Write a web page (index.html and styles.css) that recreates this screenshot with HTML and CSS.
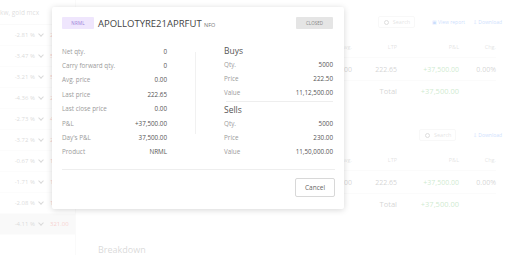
FILE: index.html
```html
<!DOCTYPE html>
<html lang="en">
<head>
    <meta charset="UTF-8">
    <meta name="viewport" content="width=device-width, initial-scale=1.0">
    <title>Positions</title>
    <link rel="stylesheet" href="styles.css">
</head>
<body>
    <div class="page">
        <aside class="watch">
            <div class="watch-search">kw, gold mcx</div>
            <div class="watch-row"><span class="chg">-2.81 %</span><span class="chev"></span><span class="ltp">2</span></div>
            <div class="watch-row"><span class="chg">-3.47 %</span><span class="chev"></span><span class="ltp">5</span></div>
            <div class="watch-row"><span class="chg">-3.21 %</span><span class="chev"></span><span class="ltp">5</span></div>
            <div class="watch-row"><span class="chg">-4.36 %</span><span class="chev"></span><span class="ltp">2</span></div>
            <div class="watch-row"><span class="chg">-2.73 %</span><span class="chev"></span><span class="ltp">4</span></div>
            <div class="watch-row"><span class="chg">-3.72 %</span><span class="chev"></span><span class="ltp">2</span></div>
            <div class="watch-row"><span class="chg">-0.67 %</span><span class="chev"></span><span class="ltp">1</span></div>
            <div class="watch-row"><span class="chg">-1.71 %</span><span class="chev"></span><span class="ltp">1</span></div>
            <div class="watch-row"><span class="chg">-2.08 %</span><span class="chev"></span><span class="ltp">1</span></div>
            <div class="watch-row active"><span class="chg">-4.11 %</span><span class="chev"></span><span class="ltp">321.00</span></div>
        </aside>

        <main class="content">
            <section class="block">
                <div class="toolbar">
                    <div class="search"><span class="glass"></span>Search</div>
                    <a class="link wide">&#9635; View report</a>
                    <a class="link">&#8681; Download</a>
                </div>
                <div class="table">
                    <div class="tr th"><span>Avg.</span><span>LTP</span><span>P&amp;L</span><span>Chg.</span></div>
                    <div class="tr"><span>0.00</span><span>222.65</span><span class="pos">+37,500.00</span><span>0.00%</span></div>
                    <div class="tr total"><span></span><span>Total</span><span class="pos">+37,500.00</span><span></span></div>
                </div>
            </section>

            <section class="block second">
                <div class="toolbar">
                    <div class="search"><span class="glass"></span>Search</div>
                    <a class="link">&#8681; Download</a>
                </div>
                <div class="table">
                    <div class="tr th"><span>Avg.</span><span>LTP</span><span>P&amp;L</span><span>Chg.</span></div>
                    <div class="tr"><span>0.00</span><span>222.65</span><span class="pos">+37,500.00</span><span>0.00%</span></div>
                    <div class="tr total"><span></span><span>Total</span><span class="pos">+37,500.00</span><span></span></div>
                </div>
            </section>

            <h3 class="breakdown">Breakdown</h3>
        </main>
    </div>

    <div class="overlay"></div>

    <div class="modal">
        <div class="modal-head">
            <span class="badge">NRML</span>
            <span class="symbol">APOLLOTYRE21APRFUT <small>NFO</small></span>
            <span class="status">CLOSED</span>
        </div>

        <div class="modal-body">
            <div class="col-left">
                <div class="kv"><span>Net qty.</span><b>0</b></div>
                <div class="kv"><span>Carry forward qty.</span><b>0</b></div>
                <div class="kv"><span>Avg. price</span><b>0.00</b></div>
                <div class="kv"><span>Last price</span><b>222.65</b></div>
                <div class="kv"><span>Last close price</span><b>0.00</b></div>
                <div class="kv"><span>P&amp;L</span><b>+37,500.00</b></div>
                <div class="kv"><span>Day's P&amp;L</span><b>37,500.00</b></div>
                <div class="kv"><span>Product</span><b>NRML</b></div>
            </div>

            <div class="divider"></div>

            <div class="col-right">
                <h4>Buys</h4>
                <div class="kv"><span>Qty.</span><b>5000</b></div>
                <div class="kv"><span>Price</span><b>222.50</b></div>
                <div class="kv"><span>Value</span><b>11,12,500.00</b></div>
                <hr>
                <h4>Sells</h4>
                <div class="kv"><span>Qty.</span><b>5000</b></div>
                <div class="kv"><span>Price</span><b>230.00</b></div>
                <div class="kv"><span>Value</span><b>11,50,000.00</b></div>
            </div>
        </div>

        <div class="modal-foot">
            <button class="btn">Cancel</button>
        </div>
    </div>
</body>
</html>
```

FILE: styles.css
```css
body, html {
    margin: 0;
    padding: 0;
    font-family: "Open Sans", "Liberation Sans", sans-serif;
    background-color: #fff;
    color: #444;
    width: 512px;
    height: 255px;
    overflow: hidden;
}

.page {
    display: flex;
    height: 255px;
}

/* marketwatch a la esquerda */
.watch {
    width: 75px;
    display: flex;
    flex-direction: column;
    border-right: 1px solid #eee;
}

.watch-search {
    height: 25px;
    line-height: 26px;
    font-size: 6.5px;
    color: #888;
    border-bottom: 1px solid #eee;
    box-sizing: border-box;
}

.watch-row {
    height: 21px;
    display: flex;
    align-items: center;
    font-size: 6px;
    border-bottom: 1px solid #f2f2f2;
    box-sizing: border-box;
}

.watch-row.active {
    background-color: #eaeaea;
}

.chg {
    width: 35px;
    text-align: right;
    color: #777;
}

.chev {
    width: 3px;
    height: 3px;
    border-right: 1px solid #777;
    border-bottom: 1px solid #777;
    transform: rotate(45deg);
    margin: -2px 7px 0 4px;
}

.ltp {
    color: #df514c;
}

/* conteudo principal */
.content {
    flex: 1;
    display: flex;
    flex-direction: column;
    padding: 14px 16px 0 22px;
}

.block.second {
    margin-top: 26px;
}

.toolbar {
    display: flex;
    justify-content: flex-end;
    align-items: center;
    gap: 8px;
    height: 16px;
    margin-right: -6px;
}

.search {
    width: 37px;
    height: 12px;
    box-sizing: border-box;
    border: 1px solid #e4e4e4;
    border-radius: 2px;
    font-size: 5.5px;
    color: #999;
    display: flex;
    align-items: center;
    padding-left: 5px;
    gap: 4px;
    margin-right: 9px;
}

.glass {
    width: 3px;
    height: 3px;
    border: 1px solid #888;
    border-radius: 50%;
}

.link {
    font-size: 5px;
    color: #4184f3;
    white-space: nowrap;
}

.table {
    margin-top: 7px;
}

.tr {
    display: grid;
    grid-template-columns: 1fr 45px 62px 37px;
    height: 22px;
    align-items: center;
    font-size: 7px;
    color: #666;
    border-bottom: 1px solid #f0f0f0;
}

.tr span {
    text-align: right;
}

.tr.th {
    height: 20px;
    font-size: 5.5px;
    color: #999;
}

.tr.total {
    height: 20px;
    border-bottom: none;
    font-size: 7.5px;
}

.pos {
    color: #4caf50;
}

.breakdown {
    margin: 29px 0 0 0;
    font-weight: normal;
    font-size: 9px;
    color: #777;
}

.overlay {
    position: absolute;
    inset: 0;
    background-color: rgba(255, 255, 255, 0.72);
}

/* janela modal */
.modal {
    position: absolute;
    left: 52px;
    top: 7px;
    width: 292px;
    height: 202px;
    box-sizing: border-box;
    background-color: #fff;
    box-shadow: 0 1px 6px rgba(0, 0, 0, 0.16);
    border-radius: 2px;
    padding: 10px 11px 0 10px;
}

.modal-head {
    display: flex;
    align-items: center;
    height: 12px;
}

.badge {
    width: 32px;
    height: 12px;
    line-height: 12px;
    text-align: center;
    background-color: #efe6fd;
    color: #9a7fd8;
    font-size: 4.5px;
    letter-spacing: 0.2px;
    border-radius: 1px;
}

.symbol {
    margin-left: 4px;
    font-size: 9.5px;
    color: #444;
    flex: 1;
    white-space: nowrap;
}

.symbol small {
    font-size: 5.5px;
    color: #777;
}

.status {
    width: 37px;
    height: 12px;
    line-height: 12px;
    text-align: center;
    background-color: #e5e5e5;
    color: #888;
    font-size: 4.5px;
    border-radius: 1px;
}

.modal-body {
    display: flex;
    margin-top: 15px;
}

.col-left {
    width: 107px;
}

.kv {
    display: flex;
    justify-content: space-between;
    align-items: center;
    height: 14.4px;
    font-size: 6.3px;
}

.kv span {
    color: #9b9b9b;
}

.kv b {
    font-weight: normal;
    color: #555;
}

.divider {
    width: 1px;
    height: 82px;
    margin: 8px 28px 0 28px;
    background-color: #f1f1f1;
}

.col-right {
    width: 111px;
}

.col-right .kv {
    height: 14px;
}

.col-right h4 {
    margin: 0;
    height: 13px;
    line-height: 13px;
    font-size: 8.5px;
    font-weight: normal;
    color: #555;
}

.col-right hr {
    border: none;
    border-top: 1px solid #eee;
    margin: 2px 0 1px 2px;
}

.modal-foot {
    margin-top: 10px;
    border-top: 1px solid #eee;
    padding-top: 8px;
    display: flex;
    justify-content: flex-end;
    margin-right: -2px;
}

.btn {
    width: 40px;
    height: 19px;
    box-sizing: border-box;
    background: #fff;
    border: 1px solid #d8d8d8;
    border-radius: 2px;
    font-family: inherit;
    font-size: 6.5px;
    color: #666;
    padding: 0;
}
```
